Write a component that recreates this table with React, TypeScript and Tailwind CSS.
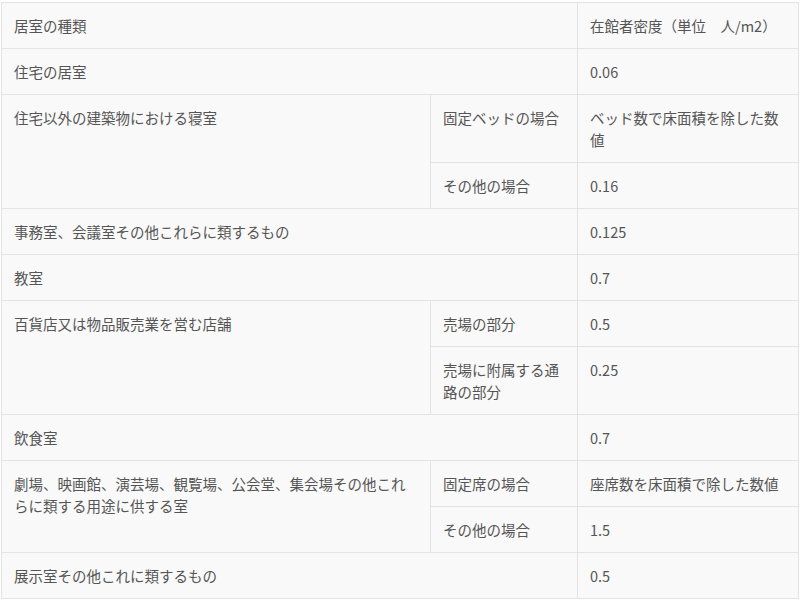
import React from 'react';

const cell = 'border border-[#e3e3e3] px-3 pt-[12px] pb-[11px] align-top text-left font-normal';

const App: React.FC = () => {
  return (
    <div className="min-h-[601px] bg-white pt-[2px] pl-[1px]">
      <table
        className="w-[797px] table-fixed border-collapse bg-[#f9f9f9] text-[14.5px] leading-[22px] text-[#555]"
        style={{ fontFamily: '"Noto Sans CJK JP", "Noto Sans", sans-serif' }}
      >
        <colgroup>
          <col className="w-[429px]" />
          <col className="w-[147px]" />
          <col className="w-[221px]" />
        </colgroup>
        <thead>
          <tr>
            <th className={cell} colSpan={2}>居室の種類</th>
            <th className={cell}>在館者密度（単位　人/m2）</th>
          </tr>
        </thead>
        <tbody>
          <tr>
            <td className={cell} colSpan={2}>住宅の居室</td>
            <td className={cell}>0.06</td>
          </tr>
          {/* 寝室 */}
          <tr>
            <td className={cell} rowSpan={2}>住宅以外の建築物における寝室</td>
            <td className={cell}>固定ベッドの場合</td>
            <td className={cell}>ベッド数で床面積を除した数値</td>
          </tr>
          <tr>
            <td className={cell}>その他の場合</td>
            <td className={cell}>0.16</td>
          </tr>
          <tr>
            <td className={cell} colSpan={2}>事務室、会議室その他これらに類するもの</td>
            <td className={cell}>0.125</td>
          </tr>
          <tr>
            <td className={cell} colSpan={2}>教室</td>
            <td className={cell}>0.7</td>
          </tr>
          {/* 店舗 */}
          <tr>
            <td className={cell} rowSpan={2}>百貨店又は物品販売業を営む店舗</td>
            <td className={cell}>売場の部分</td>
            <td className={cell}>0.5</td>
          </tr>
          <tr>
            <td className={cell}>売場に附属する通路の部分</td>
            <td className={cell}>0.25</td>
          </tr>
          <tr>
            <td className={cell} colSpan={2}>飲食室</td>
            <td className={cell}>0.7</td>
          </tr>
          {/* 劇場など */}
          <tr>
            <td className={cell} rowSpan={2}>
              劇場、映画館、演芸場、観覧場、公会堂、集会場その他これらに類する用途に供する室
            </td>
            <td className={cell}>固定席の場合</td>
            <td className={cell}>座席数を床面積で除した数値</td>
          </tr>
          <tr>
            <td className={cell}>その他の場合</td>
            <td className={cell}>1.5</td>
          </tr>
          <tr>
            <td className={cell} colSpan={2}>展示室その他これに類するもの</td>
            <td className={cell}>0.5</td>
          </tr>
        </tbody>
      </table>
    </div>
  );
};

export default App;
